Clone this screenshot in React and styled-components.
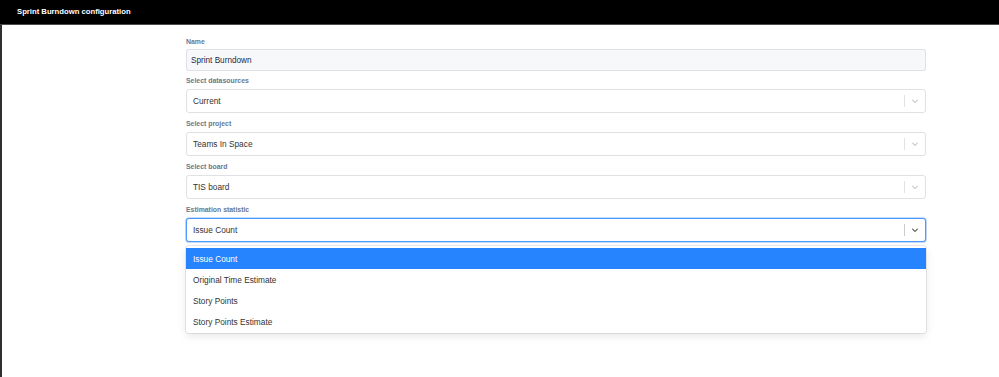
import React from "react";
import styled, { createGlobalStyle } from "styled-components";

const GlobalStyle = createGlobalStyle`
  html, body {
    margin: 0;
    padding: 0;
    background: #fff;
    font-family: "Liberation Sans", Arial, sans-serif;
  }
`;

const Page = styled.div`
  display: flex;
  flex-direction: column;
  min-height: 100vh;
`;

const Header = styled.header`
  height: 23px;
  background: #000;
  border-bottom: 1px solid #4a4a4a;
  display: flex;
  align-items: center;
  padding: 0 0 1px 17px;
  color: #fff;
  font-size: 7.7px;
  font-weight: 700;
`;

const Body = styled.main`
  flex: 1;
  border-left: 2px solid #2e2e33;
  padding: 12px 73px 0 184px;
`;

const Form = styled.div`
  display: flex;
  flex-direction: column;
`;

const Field = styled.div`
  position: relative;
  margin-bottom: ${(p) => (p.$tight ? 5 : 6)}px;
`;

const Label = styled.div`
  font-size: 6.9px;
  font-weight: 700;
  line-height: 10px;
  color: #6b778c;
  margin-bottom: ${(p) => (p.$tight ? 2 : 3)}px;
`;

const TextInput = styled.div`
  height: 22px;
  box-sizing: border-box;
  border: 1px solid #dfe1e6;
  border-radius: 2px;
  background: #f7f8fa;
  display: flex;
  align-items: center;
  padding-left: 4px;
  font-size: 8.2px;
  color: #172b4d;
`;

const Control = styled.div`
  height: 24px;
  box-sizing: border-box;
  border: 1px solid ${(p) => (p.$focused ? "#4c9aff" : "#e1e1e4")};
  box-shadow: ${(p) => (p.$focused ? "0 0 0 0.6px #8bb9f5" : "none")};
  border-radius: 3px;
  background: #fff;
  display: flex;
  align-items: center;
`;

const Value = styled.div`
  flex: 1;
  padding-left: 6px;
  font-size: 8.3px;
  color: #333;
`;

const Separator = styled.span`
  width: 1px;
  height: 12px;
  background: ${(p) => (p.$focused ? "#cccccc" : "#e2e2e2")};
`;

const Indicator = styled.div`
  width: 20px;
  display: flex;
  justify-content: center;
  align-items: center;
  color: ${(p) => (p.$focused ? "#555" : "#c8c8c8")};
`;

const Menu = styled.div`
  position: absolute;
  left: 0;
  right: 0;
  top: calc(100% + 4px);
  background: #fff;
  border-radius: 3px;
  box-shadow: 0 0 0 1px rgba(0, 0, 0, 0.08), 0 3px 8px rgba(0, 0, 0, 0.1);
  padding: 2px 0 1px;
`;

const Option = styled.div`
  height: 21px;
  display: flex;
  align-items: center;
  padding-left: 7px;
  font-size: 8.3px;
  color: ${(p) => (p.$active ? "#fff" : "#333")};
  background: ${(p) => (p.$active ? "#2684ff" : "transparent")};
`;

function Chevron() {
  return (
    <svg width="10" height="10" viewBox="0 0 20 20" fill="currentColor">
      <path d="M4.516 7.548c0.436-0.446 1.043-0.481 1.576 0l3.908 3.747 3.908-3.747c0.533-0.481 1.141-0.446 1.574 0 0.436 0.445 0.408 1.197 0 1.615-0.406 0.418-4.695 4.502-4.695 4.502-0.217 0.223-0.502 0.335-0.787 0.335s-0.57-0.112-0.789-0.335c0 0-4.287-4.084-4.695-4.502s-0.436-1.17 0-1.615z" />
    </svg>
  );
}

function Select({ label, value, focused, options }) {
  return (
    <Field>
      <Label>{label}</Label>
      <Control $focused={focused}>
        <Value>{value}</Value>
        <Separator $focused={focused} />
        <Indicator $focused={focused}>
          <Chevron />
        </Indicator>
      </Control>
      {options && (
        <Menu>
          {options.map((o) => (
            <Option key={o} $active={o === value}>
              {o}
            </Option>
          ))}
        </Menu>
      )}
    </Field>
  );
}

export default function App() {
  return (
    <Page>
      <GlobalStyle />
      <Header>Sprint Burndown configuration</Header>
      <Body>
        <Form>
          <Field $tight>
            <Label $tight>Name</Label>
            <TextInput>Sprint Burndown</TextInput>
          </Field>
          <Select label="Select datasources" value="Current" />
          <Select label="Select project" value="Teams In Space" />
          <Select label="Select board" value="TIS board" />
          <Select
            label="Estimation statistic"
            value="Issue Count"
            focused
            options={[
              "Issue Count",
              "Original Time Estimate",
              "Story Points",
              "Story Points Estimate",
            ]}
          />
        </Form>
      </Body>
    </Page>
  );
}
